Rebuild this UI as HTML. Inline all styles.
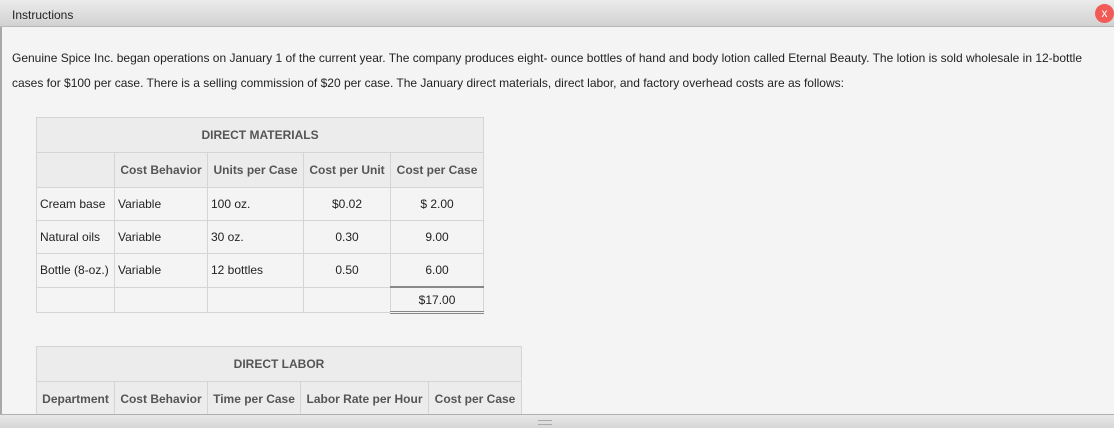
<!DOCTYPE html>
<html><head><style>
body{margin:0;width:1114px;height:427px;overflow:hidden;background:#f3f4f3;font-family:"Liberation Sans",sans-serif;position:relative}
.hdr{position:absolute;left:0;top:0;width:1114px;height:27px;background:linear-gradient(#ececec,#d2d2d2);border-bottom:1px solid #b8b8b8;box-sizing:border-box}
.hdr span{position:absolute;left:12px;top:8px;font-size:12px;color:#222}
.x{position:absolute;left:1095px;top:4px;width:19px;height:19px;border-radius:50%;background:#f15a55;color:#fff;font-size:12px;text-align:center;line-height:19px}
.lb{position:absolute;left:0;top:27px;width:2px;height:390px;background:#a8a8a8}
.bot{position:absolute;left:0;top:414px;width:1114px;height:13px;background:linear-gradient(#e8e8e8,#d6d6d6);border-top:1px solid #b0b0b0}
.p{position:absolute;left:12px;font-size:12px;color:#222;white-space:nowrap}
table{position:absolute;border-collapse:collapse;font-size:12px;color:#222;table-layout:fixed}
td{border:1px solid #d4d6d6;padding:0 3px;height:32px;white-space:nowrap;overflow:hidden}
.t{background:#ececec;text-align:center;font-weight:bold;color:#555;height:34px}
.h td{background:#ececec;font-weight:bold;color:#555;text-align:center;height:34px}
.l td{height:23px}
.c{text-align:center}
</style></head><body>
<div class="hdr"><span>Instructions</span></div>
<div class="x">x</div>
<div class="lb"></div>
<div class="p" style="top:51px">Genuine Spice Inc. began operations on January 1 of the current year. The company produces eight- ounce bottles of hand and body lotion called Eternal Beauty. The lotion is sold wholesale in 12-bottle</div>
<div class="p" style="top:76px">cases for $100 per case. There is a selling commission of $20 per case. The January direct materials, direct labor, and factory overhead costs are as follows:</div>
<table style="left:36px;top:117px;width:447px">
<col style="width:78px"><col style="width:93px"><col style="width:96px"><col style="width:87px"><col style="width:93px">
<tr><td colspan="5" class="t">DIRECT MATERIALS</td></tr>
<tr class="h"><td></td><td>Cost Behavior</td><td>Units per Case</td><td>Cost per Unit</td><td>Cost per Case</td></tr>
<tr><td>Cream base</td><td>Variable</td><td>100 oz.</td><td class="c">$0.02</td><td class="c">$ 2.00</td></tr>
<tr><td>Natural oils</td><td>Variable</td><td>30 oz.</td><td class="c">0.30</td><td class="c">9.00</td></tr>
<tr><td>Bottle (8-oz.)</td><td>Variable</td><td>12 bottles</td><td class="c">0.50</td><td class="c" style="border-bottom:2px solid #888">6.00</td></tr>
<tr class="l"><td></td><td></td><td></td><td></td><td class="c" style="border-bottom:3px double #888">$17.00</td></tr>
</table>
<table style="left:36px;top:346px;width:485px">
<col style="width:78px"><col style="width:93px"><col style="width:93px"><col style="width:128px"><col style="width:93px">
<tr><td colspan="5" class="t">DIRECT LABOR</td></tr>
<tr class="h"><td>Department</td><td>Cost Behavior</td><td>Time per Case</td><td>Labor Rate per Hour</td><td>Cost per Case</td></tr>
</table>
<div class="bot"><div style="position:absolute;left:538px;top:5px;width:14px;height:3px;border-top:1px solid #aaa;border-bottom:1px solid #aaa"></div></div>
</body></html>
